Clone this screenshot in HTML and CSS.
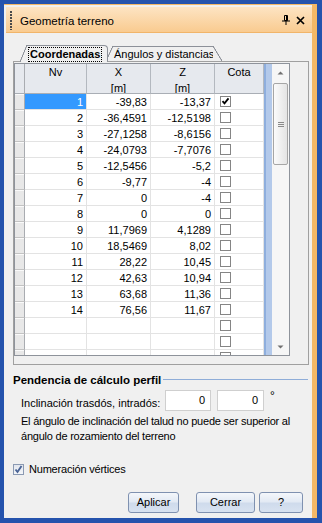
FILE: index.html
```html
<!DOCTYPE html>
<html lang="es">
<head>
<meta charset="utf-8">
<title>Geometría terreno</title>
<link rel="stylesheet" href="styles.css">
</head>
<body>
<div class="window">
  <div class="inner">
    <div class="titlebar">
      <span class="grip"></span>
      <span class="title">Geometría terreno</span>
      <span class="tb-icons">
        <svg class="pin" width="8" height="10" viewBox="0 0 8 10"><path d="M2.5 0.5h3v5h-3z" fill="none" stroke="#000"/><path d="M4.5 0.5v5" stroke="#000" stroke-width="1"/><path d="M0 6h8" stroke="#000" stroke-width="1"/><path d="M4 6v4" stroke="#000" stroke-width="1"/></svg>
        <svg class="close" width="9" height="9" viewBox="0 0 9 9"><path d="M1 1L8 8M8 1L1 8" stroke="#000" stroke-width="1.7"/></svg>
      </span>
    </div>

    <div class="tabs">
      <div class="tab active"><span class="focus">Coordenadas</span></div>
      <div class="tab second">Ángulos y distancias</div>
    </div>

    <div class="tabpage">
      <div class="grid">
        <div class="table">
          <div class="row head">
            <div class="rh"></div>
            <div>Nv</div>
            <div>X<br>[m]</div>
            <div>Z<br>[m]</div>
            <div>Cota</div>
          </div>
          <div class="row"><div class="rh"></div><div class="sel">1</div><div>-39,83</div><div>-13,37</div><div class="cota"><span class="cb on"><svg width="9" height="9" viewBox="0 0 9 9"><path d="M1.5 4.2l2 2.2 4-5" fill="none" stroke="#000" stroke-width="1.8"/></svg></span></div></div>
          <div class="row"><div class="rh"></div><div>2</div><div>-36,4591</div><div>-12,5198</div><div class="cota"><span class="cb"></span></div></div>
          <div class="row"><div class="rh"></div><div>3</div><div>-27,1258</div><div>-8,6156</div><div class="cota"><span class="cb"></span></div></div>
          <div class="row"><div class="rh"></div><div>4</div><div>-24,0793</div><div>-7,7076</div><div class="cota"><span class="cb"></span></div></div>
          <div class="row"><div class="rh"></div><div>5</div><div>-12,5456</div><div>-5,2</div><div class="cota"><span class="cb"></span></div></div>
          <div class="row"><div class="rh"></div><div>6</div><div>-9,77</div><div>-4</div><div class="cota"><span class="cb"></span></div></div>
          <div class="row"><div class="rh"></div><div>7</div><div>0</div><div>-4</div><div class="cota"><span class="cb"></span></div></div>
          <div class="row"><div class="rh"></div><div>8</div><div>0</div><div>0</div><div class="cota"><span class="cb"></span></div></div>
          <div class="row"><div class="rh"></div><div>9</div><div>11,7969</div><div>4,1289</div><div class="cota"><span class="cb"></span></div></div>
          <div class="row"><div class="rh"></div><div>10</div><div>18,5469</div><div>8,02</div><div class="cota"><span class="cb"></span></div></div>
          <div class="row"><div class="rh"></div><div>11</div><div>28,22</div><div>10,45</div><div class="cota"><span class="cb"></span></div></div>
          <div class="row"><div class="rh"></div><div>12</div><div>42,63</div><div>10,94</div><div class="cota"><span class="cb"></span></div></div>
          <div class="row"><div class="rh"></div><div>13</div><div>63,68</div><div>11,36</div><div class="cota"><span class="cb"></span></div></div>
          <div class="row"><div class="rh"></div><div>14</div><div>76,56</div><div>11,67</div><div class="cota"><span class="cb"></span></div></div>
          <div class="row"><div class="rh"></div><div></div><div></div><div></div><div class="cota"><span class="cb"></span></div></div>
          <div class="row"><div class="rh"></div><div></div><div></div><div></div><div class="cota"><span class="cb"></span></div></div>
          <div class="row"><div class="rh"></div><div></div><div></div><div></div><div class="cota"><span class="cb"></span></div></div>
        </div>
        <div class="strip"></div>
        <div class="vscroll">
          <svg class="arrow" width="7" height="4" viewBox="0 0 7 4"><path d="M0.5 3.5L3.5 0.5 6.5 3.5z" fill="#707070"/></svg>
          <div class="thumb"><span class="grip-lines"></span></div>
          <svg class="arrow down" width="7" height="4" viewBox="0 0 7 4"><path d="M0.5 0.5L3.5 3.5 6.5 0.5z" fill="#707070"/></svg>
        </div>
      </div>
    </div>

    <div class="section-head"><span class="section-title">Pendencia de cálculo perfil</span><span class="rule"></span></div>

    <div class="incl">
      <span class="incl-label">Inclinación trasdós, intradós:</span>
      <span class="field f1">0</span>
      <span class="field f2">0</span>
      <span class="deg">°</span>
    </div>

    <p class="note">El ángulo de inclinación del talud no puede ser superior al<br>ángulo de rozamiento del terreno</p>

    <div class="chk">
      <span class="chkbox"><svg width="9" height="9" viewBox="0 0 9 9"><path d="M1.5 4.5l2 2.5 4-6" fill="none" stroke="#4a6496" stroke-width="1.9"/></svg></span>
      <span class="chk-label">Numeración vértices</span>
    </div>

    <div class="buttons">
      <span class="btn b-apl">Aplicar</span>
      <span class="btn b-cer">Cerrar</span>
      <span class="btn b-help">?</span>
    </div>
  </div>
</div>
</body>
</html>
```

FILE: styles.css
```css
html, body {
  margin: 0;
  padding: 0;
}
body {
  width: 322px;
  height: 523px;
  overflow: hidden;
  font-family: "Liberation Sans", Arial, sans-serif;
  font-size: 11px;
  color: #000;
}
.window {
  width: 322px;
  height: 523px;
  box-sizing: border-box;
  background: #2553ad;
  padding: 4px 5px 5px 4px;
}
.inner {
  height: 100%;
  box-sizing: border-box;
  background: #f0f0f0;
  border-top: 1px solid #f4b866;
  border-right: 5px solid #f4b866;
  display: flex;
  flex-direction: column;
}

/* title bar */
.titlebar {
  margin: 2px 0 0 2px;
  height: 26px;
  box-sizing: border-box;
  display: flex;
  align-items: center;
  padding: 1px 7px 0 4px;
  background: linear-gradient(#fde4c3, #f9cb90);
  border-bottom: 1px solid #f1b56a;
}
.grip {
  width: 2px;
  height: 19px;
  margin-top: 1px;
  background: repeating-linear-gradient(#4a4a4a 0 2px, transparent 2px 3px);
  margin-right: 8px;
}
.title {
  font-size: 11.5px;
  padding-top: 2px;
}
.tb-icons {
  margin-left: auto;
  display: flex;
  align-items: center;
  gap: 6px;
}
.pin { display: block; }
.close { display: block; margin-top: 1px; }

/* tabs */
.tabs {
  display: flex;
  align-items: flex-end;
  height: 16px;
  margin: 12px 0 0 9px;
  position: relative;
  z-index: 1;
}
.tab {
  position: relative;
  box-sizing: border-box;
  background: #f0f0f0;
  border-top: 1px solid #8d9199;
  line-height: 14px;
  white-space: nowrap;
}
.tab::before {
  content: "";
  position: absolute;
  top: -1px;
  bottom: 0;
  left: -7px;
  width: 7px;
  background: linear-gradient(to bottom right, transparent calc(50% - 0.7px), #8d9199 calc(50% - 0.3px), #8d9199 calc(50% + 0.3px), #f0f0f0 calc(50% + 0.7px));
}
.tab.active {
  margin-left: 14px;
  width: 81px;
  height: 17px;
  margin-bottom: -1px;
  border-right: 1px solid #8d9199;
  border-top-right-radius: 4px;
  font-weight: bold;
  padding: 1px 0 0 2px;
  z-index: 2;
}
.focus {
  display: inline-block;
  outline: 1px dotted #000;
  outline-offset: 0;
  padding: 0 1px;
  line-height: 13px;
}
.tab.second {
  margin-left: 5px;
  width: 100px;
  height: 15px;
  padding: 0 0 0 1px;
  z-index: 1;
}
.tab.second::after {
  content: "";
  position: absolute;
  top: -1px;
  bottom: 0;
  right: -9px;
  width: 9px;
  background: linear-gradient(to bottom left, transparent calc(50% - 0.7px), #8d9199 calc(50% - 0.3px), #8d9199 calc(50% + 0.3px), #f0f0f0 calc(50% + 0.7px));
}

/* tab page */
.tabpage {
  margin-left: 9px;
  width: 296px;
  height: 304px;
  box-sizing: border-box;
  border: 1px solid #a0a0a0;
  padding-top: 1px;
}
.grid {
  width: 276px;
  height: 293px;
  box-sizing: border-box;
  border: 1px solid #8e939b;
  display: flex;
  background: #fff;
}
.table {
  width: 249px;
  height: 291px;
  overflow: hidden;
}
.row {
  display: grid;
  grid-template-columns: 10px 62px 64px 64px 49px;
  height: 16px;
}
.row > div {
  box-sizing: border-box;
  border-right: 1px solid #e3e3e3;
  border-bottom: 1px solid #e3e3e3;
  text-align: right;
  padding-right: 3px;
  line-height: 16px;
  white-space: nowrap;
  overflow: hidden;
}
.row > .rh {
  background: #e8e8e8;
  border-right: 1px solid #a9acb1;
  border-bottom: 1px solid #c3c3c3;
  box-shadow: inset 0 1px #fafafa;
  padding: 0;
}
.row > .sel {
  background: #3399ff;
  color: #fff;
}
.row > .cota {
  display: flex;
  align-items: center;
  padding: 0 0 0 5px;
}
.cb {
  width: 11px;
  height: 11px;
  box-sizing: border-box;
  border: 1px solid #858585;
  background: #fff;
  display: flex;
  align-items: center;
  justify-content: center;
}
.cb svg { display: block; }
.head {
  height: 30px;
}
.head > div {
  background: #e6e9ee;
  text-align: center;
  padding: 0;
  line-height: 16px;
  border-right: 1px solid #b3b8bf;
  border-bottom: 1px solid #a9aeb5;
}
.head > .rh {
  background: #e6e9ee;
  box-shadow: none;
  border-bottom: 1px solid #a9aeb5;
}
.strip {
  width: 8px;
  background: linear-gradient(to right, #8eaedd 0 2px, #b3c9ea 2px);
}
.vscroll {
  width: 17px;
  background: #f6f6f6;
  display: flex;
  flex-direction: column;
  align-items: center;
}
.arrow { display: block; margin-top: 7px; }
.arrow.down { margin-top: auto; margin-bottom: 6px; }
.thumb {
  margin-top: 8px;
  width: 15px;
  height: 82px;
  box-sizing: border-box;
  border: 1px solid #a6a6a6;
  border-radius: 2px;
  background: linear-gradient(to right, #fbfbfb, #e4e4e4);
  display: flex;
  align-items: center;
  justify-content: center;
}
.grip-lines {
  width: 6px;
  height: 5px;
  background: repeating-linear-gradient(#8a8a8a 0 1px, transparent 1px 2px);
}

/* section */
.section-head {
  display: flex;
  align-items: center;
  margin: 8px 4px 0 9px;
  height: 14px;
}
.section-title {
  font-weight: bold;
  font-size: 11.5px;
  white-space: nowrap;
}
.rule {
  flex: 1;
  height: 1px;
  background: #8fadd8;
  margin: -1px 0 0 2px;
}
.incl {
  display: flex;
  margin: 3px 0 0 17px;
  height: 21px;
}
.incl-label {
  width: 144px;
  padding-top: 7px;
  white-space: nowrap;
}
.field {
  box-sizing: border-box;
  height: 21px;
  background: #fff;
  border: 1px solid #cfcfcf;
  text-align: right;
  padding: 3px 5px 0 0;
}
.f1 { width: 46px; }
.f2 { width: 47px; margin-left: 6px; }
.deg {
  margin: -1px 0 0 6px;
  font-size: 12px;
}
.note {
  margin: 3px 0 0 17px;
  line-height: 15px;
  white-space: nowrap;
  letter-spacing: -0.22px;
}
.chk {
  display: flex;
  align-items: center;
  margin: 18px 0 0 9px;
  height: 14px;
  gap: 5px;
}
.chk-label {
  letter-spacing: -0.2px;
}
.chkbox {
  width: 11px;
  height: 11px;
  box-sizing: border-box;
  border: 1px solid #8b9ab3;
  background: linear-gradient(#e2e6ee, #f4f6f9);
  display: flex;
  align-items: center;
  justify-content: center;
}
.chkbox svg { display: block; }
.buttons {
  display: flex;
  justify-content: flex-end;
  margin: 16px 9px 0 0;
}
.btn {
  box-sizing: border-box;
  height: 21px;
  line-height: 19px;
  text-align: center;
  border: 1px solid #7f91b0;
  border-radius: 3px;
  background: linear-gradient(#f4f7fb 0%, #e3eaf4 45%, #cfdbec 55%, #d8e2f0 100%);
}
.b-apl { width: 51px; }
.b-cer { width: 59px; margin-left: 17px; }
.b-help { width: 44px; margin-left: 4px; }
```
